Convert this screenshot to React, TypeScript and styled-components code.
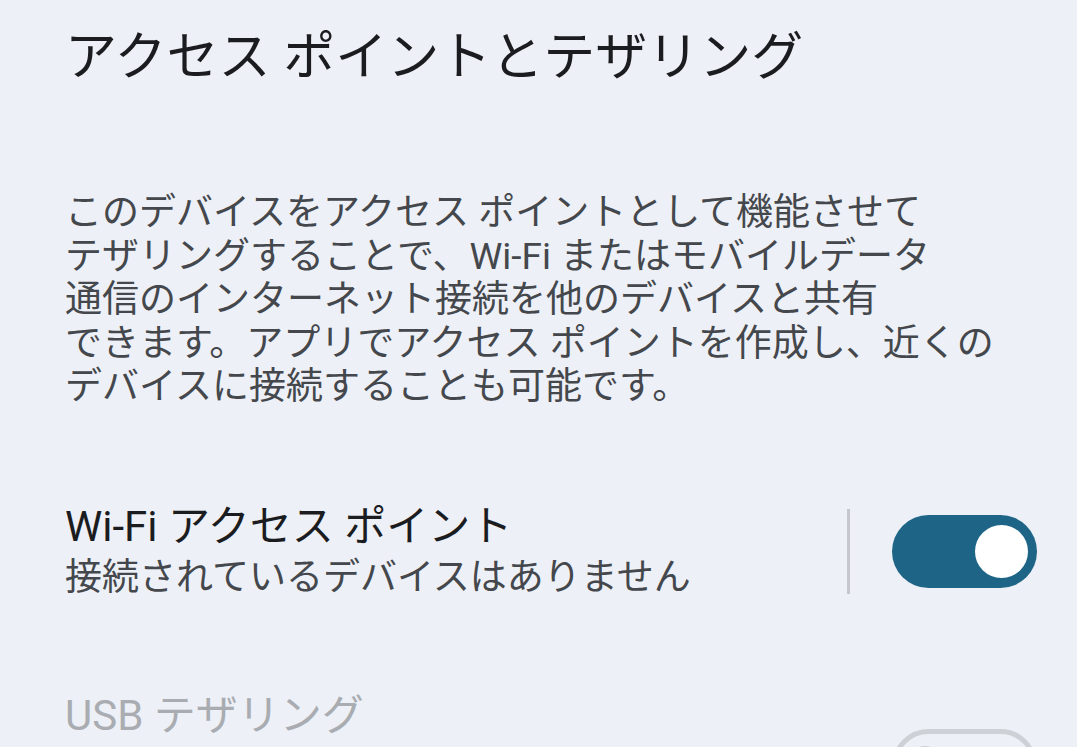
import React from "react"
import styled, { createGlobalStyle } from "styled-components"

const GlobalStyle = createGlobalStyle`
  html, body {
    margin: 0;
    padding: 0;
    background: #edf0f6;
  }
  body {
    font-family: Roboto, "Noto Sans CJK JP", sans-serif;
    -webkit-font-smoothing: antialiased;
  }
`

const Page = styled.div`
  width: 1077px;
  height: 747px;
  overflow: hidden;
  box-sizing: border-box;
  padding: 22px 40px 0 65px;
`

const Title = styled.h1`
  margin: 0;
  font-size: 52px;
  line-height: 72px;
  font-weight: 400;
  color: #1b1c1f;
`

const Description = styled.p`
  margin: 97px 0 0;
  font-size: 37px;
  line-height: 43.5px;
  color: #44474c;
  max-width: 960px;
`

const SettingRow = styled.div<{ $disabled?: boolean }>`
  display: flex;
  align-items: ${({ $disabled }) => ($disabled ? "flex-start" : "center")};
  margin-top: ${({ $disabled }) => ($disabled ? "87px" : "92px")};
`

const RowText = styled.div`
  flex: 1;
  min-width: 0;
  padding-right: 40px;
`

const RowTitle = styled.div<{ $disabled?: boolean }>`
  font-size: 42px;
  line-height: 52px;
  color: ${({ $disabled }) => ($disabled ? "#a9acb1" : "#1b1c1f")};
`

const RowSummary = styled.div`
  font-size: 37px;
  line-height: 50px;
  color: #44474c;
`

const Divider = styled.div`
  width: 3px;
  height: 85px;
  background: #c5c7cc;
  margin-right: 42px;
`

const Track = styled.div<{ $on: boolean }>`
  flex: none;
  width: 145px;
  height: 73px;
  box-sizing: border-box;
  border-radius: 37px;
  display: flex;
  align-items: center;
  padding: 0 9px;
  margin-top: ${({ $on }) => ($on ? "0" : "39px")};
  justify-content: ${({ $on }) => ($on ? "flex-end" : "flex-start")};
  background: ${({ $on }) => ($on ? "#1d6487" : "transparent")};
  border: ${({ $on }) => ($on ? "none" : "5px solid #cdd0d5")};
`

const Thumb = styled.div<{ $on: boolean }>`
  width: ${({ $on }) => ($on ? "53px" : "38px")};
  height: ${({ $on }) => ($on ? "53px" : "38px")};
  border-radius: 50%;
  background: ${({ $on }) => ($on ? "#ffffff" : "#cdd0d5")};
`

const Switch = ({ on }: { on: boolean }) => (
  <Track $on={on}>
    <Thumb $on={on} />
  </Track>
)

export default function App() {
  return (
    <>
      <GlobalStyle />
      <Page>
        <Title>アクセス ポイントとテザリング</Title>
        <Description>
          このデバイスをアクセス ポイントとして機能させて
          <br />
          テザリングすることで、Wi-Fi またはモバイルデータ
          <br />
          通信のインターネット接続を他のデバイスと共有
          <br />
          できます。アプリでアクセス ポイントを作成し、近くの
          <br />
          デバイスに接続することも可能です。
        </Description>

        <SettingRow>
          <RowText>
            <RowTitle>Wi-Fi アクセス ポイント</RowTitle>
            <RowSummary>接続されているデバイスはありません</RowSummary>
          </RowText>
          <Divider />
          <Switch on />
        </SettingRow>

        <SettingRow $disabled>
          <RowText>
            <RowTitle $disabled>USB テザリング</RowTitle>
          </RowText>
          <Switch on={false} />
        </SettingRow>
      </Page>
    </>
  )
}
